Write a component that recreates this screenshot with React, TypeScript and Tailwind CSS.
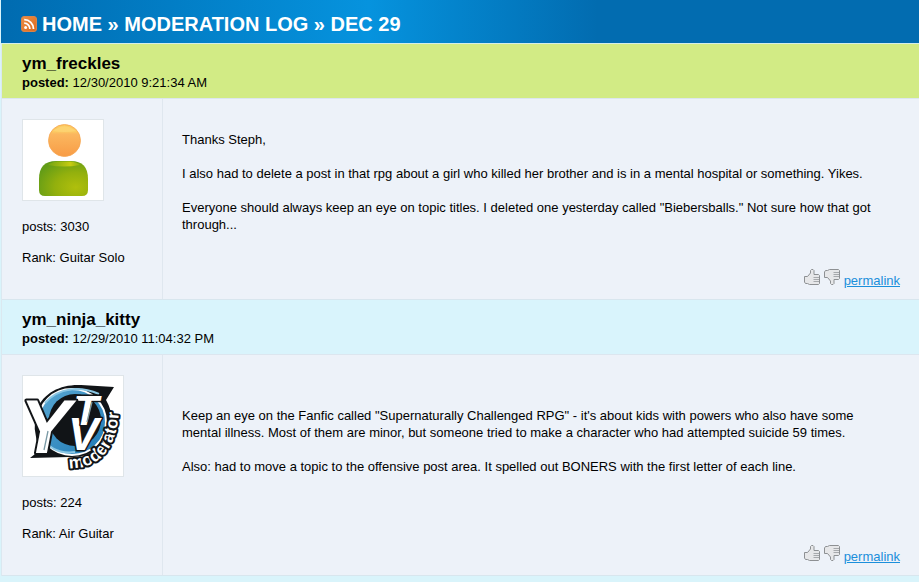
import type { ReactNode } from "react";

function FeedIcon() {
  return (
    <svg width="16" height="16" viewBox="0 0 16 16" aria-hidden="true">
      <defs>
        <linearGradient id="feed" x1="0" y1="0" x2="1" y2="1">
          <stop offset="0" stopColor="#ec8f45" />
          <stop offset="1" stopColor="#dc6a1f" />
        </linearGradient>
      </defs>
      <rect x="0.5" y="0.5" width="15" height="15" rx="2.5" fill="url(#feed)" stroke="#d9834a" />
      <circle cx="4.6" cy="11.6" r="1.5" fill="#fff" />
      <path d="M3.2 7.2a5.7 5.7 0 0 1 5.7 5.7M3.2 3.6a9.3 9.3 0 0 1 9.3 9.3" fill="none" stroke="#fff" strokeWidth="1.8" />
    </svg>
  );
}

function PersonAvatar() {
  return (
    <svg width="80" height="80" viewBox="0 0 80 80" role="img" aria-label="ym_freckles">
      <defs>
        <linearGradient id="head" x1="0" y1="0" x2="0" y2="1">
          <stop offset="0" stopColor="#fcc95e" />
          <stop offset="0.22" stopColor="#fcca62" />
          <stop offset="0.3" stopColor="#fbb75f" />
          <stop offset="1" stopColor="#f89c46" />
        </linearGradient>
        <radialGradient id="body" cx="0.75" cy="0.75" r="0.85">
          <stop offset="0" stopColor="#b0bf0c" />
          <stop offset="0.5" stopColor="#93b00d" />
          <stop offset="1" stopColor="#629c17" />
        </radialGradient>
        <linearGradient id="shine" x1="0" y1="0" x2="1" y2="0">
          <stop offset="0" stopColor="#8bb010" stopOpacity="0.5" />
          <stop offset="0.7" stopColor="#c8cc12" />
          <stop offset="1" stopColor="#a9bd10" stopOpacity="0.5" />
        </linearGradient>
      </defs>
      <circle cx="41.5" cy="20.5" r="16" fill="url(#head)" stroke="#f6a650" strokeWidth="0.8" />
      <path d="M30 11Q41.500 1.500 53 11Q41.500 13 30 11Z" fill="#fddb80" opacity="0.5" />
      <path d="M16 59Q16 41 33 41H48Q65 41 65 59V70Q65 76 59 76H22Q16 76 16 70Z" fill="url(#body)" />
      <path d="M25 45Q29 41.500 35 41.500H47Q53 41.500 57 45Q41 48 25 45Z" fill="url(#shine)" />
    </svg>
  );
}

function ModeratorLogo() {
  return (
    <svg width="100" height="100" viewBox="0 0 100 100" role="img" aria-label="ym_ninja_kitty">
      <defs>
        <linearGradient id="ring" x1="0" y1="0" x2="1" y2="1">
          <stop offset="0" stopColor="#5ba9d3" />
          <stop offset="1" stopColor="#1e79b5" />
        </linearGradient>
        <path id="arc" d="M46 92C76 93 95 73 96 32" />
      </defs>
      <path d="M14 33C21 16 39 8 58 9L91 11L83 24Q94 43 83 63Q71 82 46 81L7 82L17 74Q8 53 14 33Z" fill="#111417" />
      <ellipse cx="49" cy="46" rx="34" ry="33" fill="url(#ring)" stroke="#fff" strokeWidth="2" />
      <ellipse cx="52" cy="44" rx="26" ry="26" fill="#111417" />
      <path d="M22 27C36 11 57 10 76 18M17 55C22 72 36 78 52 76" fill="none" stroke="#8ac6e3" strokeWidth="2" />
      <g
        fontFamily="Liberation Sans, Arial, sans-serif"
        fontWeight="bold"
        fontStyle="italic"
        fill="#fff"
        stroke="#111417"
        strokeLinejoin="round"
        paintOrder="stroke"
      >
        <text x="45" y="74" fontSize="46" strokeWidth="3">V</text>
        <text x="50" y="49" fontSize="42" strokeWidth="3">T</text>
        <text x="-3" y="77" fontSize="76" strokeWidth="4">Y</text>
      </g>
      <path d="M25 55L21 74M69 26L64 46" stroke="#7999a5" strokeWidth="1.3" fill="none" />
      <text fontFamily="Liberation Sans, Arial, sans-serif" fontWeight="bold" fontSize="17" fill="#fff" stroke="#111417" strokeWidth="4" strokeLinejoin="round" paintOrder="stroke">
        <textPath href="#arc">moderator</textPath>
      </text>
    </svg>
  );
}

function Thumb({ down = false }: { down?: boolean }) {
  return (
    <svg width="16" height="18" viewBox="0 0 16 18" aria-hidden="true" className={down ? "-scale-y-100" : ""}>
      <g strokeLinejoin="round" strokeWidth="1">
        <path d="M.5 8.500H3.500L6.500 5V2.500L7.500 1.500H9L10 2.500V6.500H14.500L15.500 7.500V15.500L14.500 16.500H5.500L3.500 15.500H1.500L.5 14Z" fill="#e6e7e9" stroke="#8d9093" />
        <path d="M9.500 9.500H15M9.500 11.500H15M9.500 13.500H15" stroke="#a6a9ac" fill="none" />
      </g>
    </svg>
  );
}

interface PostProps {
  name: string;
  date: string;
  avatar: ReactNode;
  posts: number;
  rank: string;
  headerClass: string;
  textClass: string;
  children: ReactNode;
}

function Post({ name, date, avatar, posts, rank, headerClass, textClass, children }: PostProps) {
  return (
    <article>
      <header className={`border-b border-[#dce6ef] px-5 pt-2.5 pb-[7px] ${headerClass}`}>
        <h2 className="text-[17px] leading-5 font-bold">{name}</h2>
        <p><strong>posted:</strong> {date}</p>
      </header>
      <div className="flex border-b border-[#d8e6ee] bg-[#edf2f9]">
        <aside className="w-[161px] shrink-0 border-r border-[#dfe7ef] pt-5 pb-[33px] pl-5">
          <div className="mb-[17px] w-fit border border-[#dfe5e9] bg-white">{avatar}</div>
          <p className="mb-3.5">posts: {posts}</p>
          <p>Rank: {rank}</p>
        </aside>
        <div className={`flex min-w-0 flex-1 flex-col px-[19px] pb-2.5 ${textClass}`}>
          <div className="flex flex-1 flex-col gap-[17px] pr-3">{children}</div>
          <div className="flex items-end justify-end gap-1">
            <button type="button" aria-label="Like" className="mb-[3px]"><Thumb /></button>
            <button type="button" aria-label="Dislike" className="mb-[3px]"><Thumb down /></button>
            <a href="#permalink" className="text-[#1b8fdb] underline">permalink</a>
          </div>
        </div>
      </div>
    </article>
  );
}

export default function App() {
  return (
    <main className="min-h-screen bg-[#d9f4fb] pl-px font-['Liberation_Sans',Arial,sans-serif] text-[13px] leading-[17px] text-black">
      <nav className="flex h-11 items-center gap-[5px] border-b border-[#d5eee9] bg-linear-to-r from-[#006bb0] via-[#0693de] via-40% to-[#026cb0] to-65% pt-1 pl-5 text-xl font-bold text-white">
        <FeedIcon />
        <h1>
          <a href="#home">HOME</a> » <a href="#log">MODERATION LOG</a> » DEC 29
        </h1>
      </nav>
      <div className="border-l border-[#dbe8f0]">
        <Post
          name="ym_freckles"
          date="12/30/2010 9:21:34 AM"
          avatar={<PersonAvatar />}
          posts={3030}
          rank="Guitar Solo"
          headerClass="bg-[#d2eb85]"
          textClass="pt-8"
        >
          <p>Thanks Steph,</p>
          <p>I also had to delete a post in that rpg about a girl who killed her brother and is in a mental hospital or something. Yikes.</p>
          <p>Everyone should always keep an eye on topic titles. I deleted one yesterday called "Biebersballs." Not sure how that got through...</p>
        </Post>
        <Post
          name="ym_ninja_kitty"
          date="12/29/2010 11:04:32 PM"
          avatar={<ModeratorLogo />}
          posts={224}
          rank="Air Guitar"
          headerClass="bg-[#d9f4fc]"
          textClass="pt-[52px]"
        >
          <p>Keep an eye on the Fanfic called "Supernaturally Challenged RPG" - it's about kids with powers who also have some mental illness. Most of them are minor, but someone tried to make a character who had attempted suicide 59 times.</p>
          <p>Also: had to move a topic to the offensive post area. It spelled out BONERS with the first letter of each line.</p>
        </Post>
      </div>
    </main>
  );
}
